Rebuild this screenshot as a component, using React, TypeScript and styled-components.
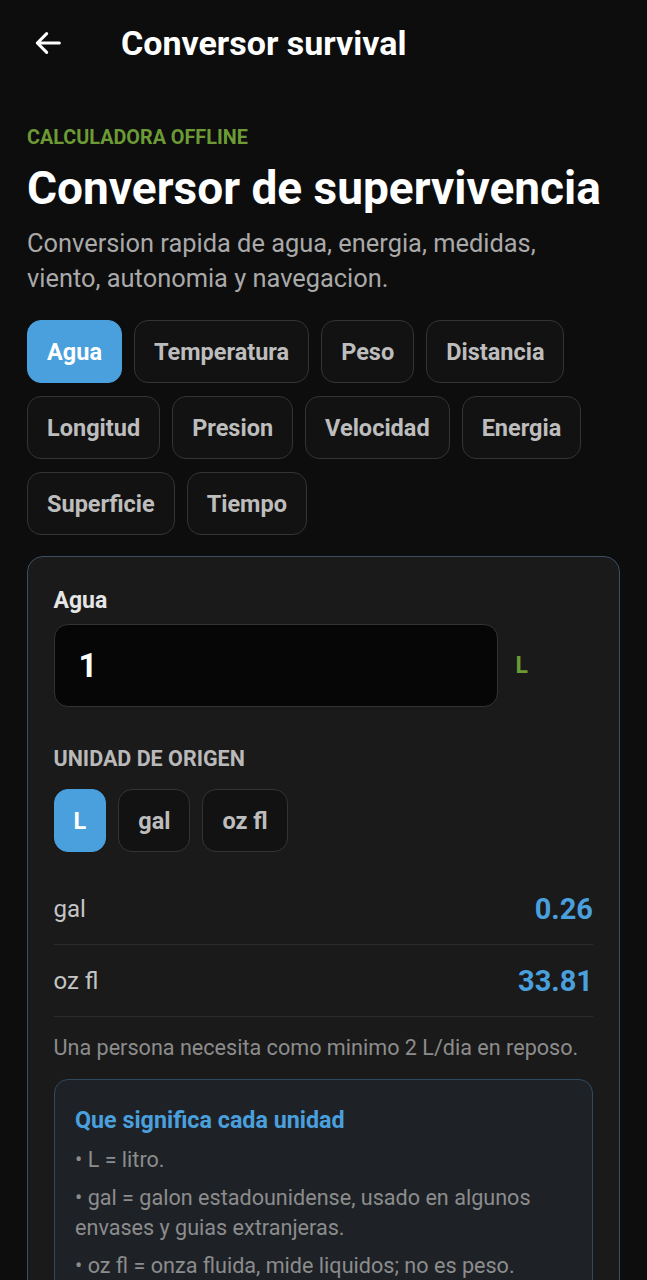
import * as React from 'react'
import styled, { createGlobalStyle } from 'styled-components'

const categories = [
  'Agua',
  'Temperatura',
  'Peso',
  'Distancia',
  'Longitud',
  'Presion',
  'Velocidad',
  'Energia',
  'Superficie',
  'Tiempo',
]

const units = ['L', 'gal', 'oz fl']

const results = [
  { unit: 'gal', value: '0.26' },
  { unit: 'oz fl', value: '33.81' },
]

export default function App() {
  return (
    <>
      <GlobalStyle />
      <Screen>
        <TopBar>
          <BackButton aria-label="Volver">
            <svg width="32" height="32" viewBox="0 0 24 24" fill="none">
              <path
                d="M20.5 12H4M11 5l-7 7 7 7"
                stroke="#fff"
                strokeWidth="2.3"
                strokeLinecap="round"
                strokeLinejoin="round"
              />
            </svg>
          </BackButton>
          <TopTitle>Conversor survival</TopTitle>
        </TopBar>

        <Content>
          <Eyebrow>CALCULADORA OFFLINE</Eyebrow>
          <Heading>Conversor de supervivencia</Heading>
          <Lead>Conversion rapida de agua, energia, medidas, viento, autonomia y navegacion.</Lead>

          <ChipWrap>
            {categories.map((c) => (
              <Chip key={c} $active={c === 'Agua'}>
                {c}
              </Chip>
            ))}
          </ChipWrap>

          <Card>
            <FieldLabel>Agua</FieldLabel>
            <InputRow>
              <ValueInput>1</ValueInput>
              <UnitTag>L</UnitTag>
            </InputRow>

            <SectionLabel>UNIDAD DE ORIGEN</SectionLabel>
            <UnitRow>
              {units.map((u) => (
                <Chip key={u} $active={u === 'L'}>
                  {u}
                </Chip>
              ))}
            </UnitRow>

            <Results>
              {results.map((r) => (
                <ResultRow key={r.unit}>
                  <ResultUnit>{r.unit}</ResultUnit>
                  <ResultValue>{r.value}</ResultValue>
                </ResultRow>
              ))}
            </Results>

            <Note>Una persona necesita como minimo 2 L/dia en reposo.</Note>

            <InfoBox>
              <InfoTitle>Que significa cada unidad</InfoTitle>
              <InfoItem>• L = litro.</InfoItem>
              <InfoItem>• gal = galon estadounidense, usado en algunos envases y guias extranjeras.</InfoItem>
              <InfoItem>• oz fl = onza fluida, mide liquidos; no es peso.</InfoItem>
            </InfoBox>
          </Card>
        </Content>
      </Screen>
    </>
  )
}

const GlobalStyle = createGlobalStyle`
  html, body {
    margin: 0;
    background: #0d0d0d;
  }
  body {
    font-family: Roboto, "Noto Sans", "Liberation Sans", sans-serif;
    color: #fff;
  }
`

const Screen = styled.div`
  width: 647px;
  min-height: 1280px;
  background: #0d0d0d;
  overflow: hidden;
`

const TopBar = styled.header`
  display: flex;
  align-items: center;
  height: 86px;
  padding-left: 32px;
`

const BackButton = styled.div`
  display: flex;
  align-items: center;
  width: 32px;
  height: 32px;
  margin-right: 57px;
`

const TopTitle = styled.h1`
  margin: 0;
  font-size: 34px;
  font-weight: 700;
  color: #fff;
`

const Content = styled.main`
  padding: 40px 27px 0;
`

const Eyebrow = styled.div`
  font-size: 19.8px;
  font-weight: 700;
  line-height: 24px;
  color: #6c9b35;
`

const Heading = styled.h2`
  margin: 12px 0 0;
  font-size: 46px;
  font-weight: 700;
  line-height: 52px;
  color: #fff;
`

const Lead = styled.p`
  margin: 12px 0 0;
  max-width: 560px;
  font-size: 25.4px;
  line-height: 35px;
  color: #a9a9a9;
`

const ChipWrap = styled.div`
  display: flex;
  flex-wrap: wrap;
  gap: 13px 12px;
  margin-top: 24px;
`

const Chip = styled.div<{ $active?: boolean }>`
  box-sizing: border-box;
  height: 63px;
  padding: 0 19px;
  display: flex;
  align-items: center;
  border-radius: 14px;
  font-size: 23.5px;
  font-weight: 700;
  color: ${(p) => (p.$active ? '#fff' : '#bdbdbd')};
  background: ${(p) => (p.$active ? '#4a9fdd' : '#121212')};
  border: 1.5px solid ${(p) => (p.$active ? '#4a9fdd' : '#343434')};
`

const Card = styled.section`
  margin-top: 21px;
  box-sizing: border-box;
  border: 1.5px solid #3b4e62;
  border-radius: 16px;
  background: #1a1a1a;
  padding: 31px 26px 30px 25.5px;
`

const FieldLabel = styled.div`
  font-size: 23px;
  font-weight: 700;
  line-height: 26px;
  color: #e6e6e6;
`

const InputRow = styled.div`
  display: flex;
  align-items: center;
  gap: 18px;
  margin-top: 10px;
`

const ValueInput = styled.div`
  box-sizing: border-box;
  width: 444px;
  height: 83px;
  padding: 0 24px;
  display: flex;
  align-items: center;
  background: #060606;
  border: 1.5px solid #333;
  border-radius: 14px;
  font-size: 33px;
  font-weight: 700;
  color: #fff;
`

const UnitTag = styled.span`
  font-size: 23px;
  font-weight: 700;
  color: #6c9b35;
`

const SectionLabel = styled.div`
  margin-top: 40px;
  font-size: 21.5px;
  font-weight: 700;
  line-height: 24px;
  color: #b9b9b9;
`

const UnitRow = styled.div`
  display: flex;
  gap: 12px;
  margin-top: 18px;
`

const Results = styled.div`
  margin-top: 21px;
`

const ResultRow = styled.div`
  display: flex;
  justify-content: space-between;
  align-items: center;
  height: 71px;
  border-bottom: 1.5px solid #2b2b2b;
`

const ResultUnit = styled.span`
  font-size: 24px;
  color: #c4c4c4;
`

const ResultValue = styled.span`
  font-size: 29px;
  font-weight: 700;
  color: #4a9fdd;
`

const Note = styled.p`
  margin: 17.5px 0 0;
  font-size: 21.6px;
  line-height: 26px;
  color: #8c8c8c;
  white-space: nowrap;
`

const InfoBox = styled.div`
  margin-top: 18px;
  box-sizing: border-box;
  border: 1.5px solid #2f4a5e;
  border-radius: 14px;
  background: #1e2227;
  padding: 26px 20.5px 20px;
`

const InfoTitle = styled.div`
  font-size: 23.3px;
  font-weight: 700;
  line-height: 28px;
  color: #4a9fdd;
  margin-bottom: 11px;
`

const InfoItem = styled.p`
  margin: 8px 0 0;
  font-size: 21.6px;
  line-height: 30px;
  color: #8c8c8c;
`
